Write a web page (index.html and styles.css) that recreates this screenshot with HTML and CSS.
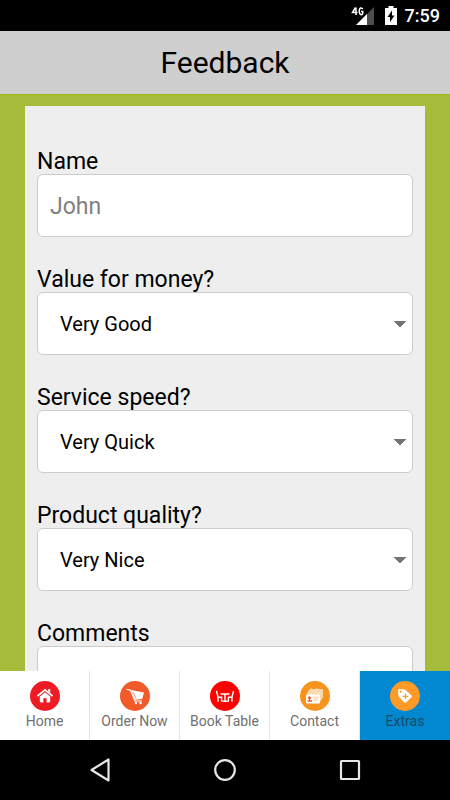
FILE: index.html
```html
<!DOCTYPE html>
<html lang="en">
<head>
<meta charset="utf-8">
<meta name="viewport" content="width=device-width, initial-scale=1">
<title>Feedback</title>
<link rel="stylesheet" href="styles.css">
</head>
<body>
<div class="status">
  <svg class="signal" width="24" height="20" viewBox="0 0 24 20" aria-hidden="true">
    <path d="M23 1V19H5Z" fill="#4d4d4d"/>
    <path d="M16 8V19H5Z" fill="#fff"/>
    <path d="M4.500 1.500 1.500 6.500H6.500M5 1.500V9" fill="none" stroke="#fff" stroke-width="1.500"/>
    <path d="M11.700 3.200C10.700 1.200 8.200 1.400 8.200 5.200S11 9.200 11.700 7.700V5.500H10" fill="none" stroke="#fff" stroke-width="1.500"/>
  </svg>
  <svg class="battery" width="12" height="19" viewBox="0 0 12 19" aria-hidden="true">
    <path d="M3.500 0H8.500V2H12V19H0V2H3.500Z" fill="#fff"/>
    <path d="M7 4.500 2.500 11H5V16L9.500 9.500H7Z" fill="#000"/>
  </svg>
  <time class="clock">7:59</time>
</div>
<header class="header"><h1 class="title">Feedback</h1></header>
<main class="content">
  <form class="card">
    <div class="field">
      <label class="label" for="name">Name</label>
      <input class="control text" id="name" type="text" placeholder="John">
    </div>
    <div class="field">
      <label class="label" for="value">Value for money?</label>
      <select class="control select" id="value"><option>Very Good</option><option>Good</option><option>Poor</option></select>
    </div>
    <div class="field">
      <label class="label" for="speed">Service speed?</label>
      <select class="control select" id="speed"><option>Very Quick</option><option>Quick</option><option>Slow</option></select>
    </div>
    <div class="field">
      <label class="label" for="quality">Product quality?</label>
      <select class="control select" id="quality"><option>Very Nice</option><option>Nice</option><option>Poor</option></select>
    </div>
    <div class="field">
      <label class="label" for="comments">Comments</label>
      <textarea class="control comments" id="comments"></textarea>
    </div>
  </form>
</main>
<nav class="tabs">
  <a class="tab" href="#home">
    <svg class="icon" viewBox="0 0 30 30" aria-hidden="true">
      <circle cx="15" cy="15" r="15" fill="#ed1c24"/>
      <path d="M7.500 15 15 8.800 22.500 15" fill="none" stroke="#fff" stroke-width="1.700"/>
      <path d="M18.200 8H20.200V12L18.200 10.500ZM9.800 15.500 15 11.300 20.200 15.500V20Q20.200 21.500 18.800 21.500H16.600V17.300H13.400V21.500H11.200Q9.800 21.500 9.800 20Z" fill="#fff"/>
    </svg>
    <span>Home</span>
  </a>
  <a class="tab" href="#order">
    <svg class="icon" viewBox="0 0 30 30" aria-hidden="true">
      <circle cx="15" cy="15" r="15" fill="#f15a29"/>
      <path d="M6.500 8.300 10.500 9.300 14.800 20H22" fill="none" stroke="#fff" stroke-width="1.100"/>
      <path d="M11 9 24 11.500 22.200 18 14.800 18.800Z" fill="#fff"/>
      <path d="M13 11 16 17.500" stroke="#f15a29" stroke-width=".6"/>
      <circle cx="16" cy="22" r="1.200" fill="#fff"/><circle cx="20.500" cy="22" r="1.200" fill="#fff"/>
    </svg>
    <span>Order Now</span>
  </a>
  <a class="tab" href="#book">
    <svg class="icon" viewBox="0 0 30 30" aria-hidden="true">
      <circle cx="15" cy="15" r="15" fill="#f00"/>
      <path d="M6.500 10 8 16.200V20.800M7.500 16.200H11.600V20.800M23.500 10 22 16.200V20.800M22.500 16.200H18.400V20.800M10.500 13H19.500M15 13V20M12.500 20.300H17.500" fill="none" stroke="#fff" stroke-width="1.400"/>
    </svg>
    <span>Book Table</span>
  </a>
  <a class="tab" href="#contact">
    <svg class="icon" viewBox="0 0 30 30" aria-hidden="true">
      <circle cx="15" cy="15" r="15" fill="#f7941d"/>
      <path d="M6.500 13.500 9 9 11 7.500 14 8.500 16 7.500 23 8.500V16L19.500 21.500Z" fill="#fde3c2"/>
      <path d="M9 13 13 9M12.500 13 16.500 9M16 13 20 9M19.500 14 23 10M20 17 23 13" stroke="#f7b566" stroke-width=".7"/>
      <rect x="6" y="13.500" width="14" height="9" rx="1" fill="#fff"/>
      <circle cx="9.500" cy="16.800" r="1.500" fill="#f15a29"/>
      <path d="M9.500 17V19.500M7.500 20H12" stroke="#f15a29" stroke-width="1.300"/>
      <path d="M13.500 16.200H18.500M13.500 18H18.500M13.500 19.800H16.500" stroke="#f9c58a" stroke-width=".9"/>
    </svg>
    <span>Contact</span>
  </a>
  <a class="tab active" href="#extras" aria-current="page">
    <svg class="icon" viewBox="0 0 30 30" aria-hidden="true">
      <circle cx="15" cy="15" r="15" fill="#ff9a26"/>
      <path d="M8 9.500Q8 8 9.500 8L15 8.500 21.500 14.500Q22.300 15.500 21.500 16.300L16 21.500Q15 22.200 14 21.300L8.500 15.500Z" fill="#fff"/>
      <circle cx="10.700" cy="10.700" r="1.100" fill="#ff9a26"/>
      <path d="M15.500 12.500V18M12.700 15.300H18.300" stroke="#ff9a26" stroke-width="1.200"/>
    </svg>
    <span>Extras</span>
  </a>
</nav>
<div class="system">
  <button class="key" type="button" aria-label="Back"><svg width="24" height="26" viewBox="0 0 24 26"><path d="M20.500 2.500V23.500L3.500 13Z" fill="none" stroke="#e6e6e6" stroke-width="2.200" stroke-linejoin="round"/></svg></button>
  <button class="key" type="button" aria-label="Home"><svg width="24" height="24" viewBox="0 0 24 24"><circle cx="12" cy="12" r="9.800" fill="none" stroke="#e6e6e6" stroke-width="2.200"/></svg></button>
  <button class="key" type="button" aria-label="Recent apps"><svg width="24" height="24" viewBox="0 0 24 24"><rect x="3" y="3" width="18" height="18" rx=".5" fill="none" stroke="#e6e6e6" stroke-width="2.200"/></svg></button>
</div>
</body>
</html>
```
FILE: styles.css
```css
* { box-sizing: border-box; }

body {
  display: flex;
  flex-direction: column;
  height: 100vh;
  margin: 0;
  overflow: hidden;
  background: #a6bb3a;
  color: #000;
  font-family: Roboto, "Liberation Sans", sans-serif;
}

.status {
  display: flex;
  flex: none;
  justify-content: flex-end;
  align-items: center;
  height: 31px;
  padding-right: 10px;
  background: #000;
  color: #fff;
}

.battery { margin: 0 8px 0 10px; }

.clock {
  font-size: 18px;
  font-weight: 500;
  line-height: 31px;
}

.header {
  flex: none;
  padding: 12px;
  background: #cfcfcf;
  text-align: center;
}

.title {
  margin: 0;
  font-size: 30px;
  font-weight: 400;
  line-height: 39px;
}

.content {
  flex: 1;
  min-height: 0;
  padding: 11px 25px;
  overflow: hidden;
  border-top: 1px solid #a0b80c;
}

.card {
  display: flex;
  flex-direction: column;
  gap: 31px;
  padding: 44px 12px;
  background: #eee;
}

.field {
  display: flex;
  flex-direction: column;
}

.label {
  font-size: 23px;
  line-height: 24px;
}

.control {
  width: 100%;
  height: 63px;
  padding: 0 12px;
  border: 1px solid #ccc;
  border-radius: 6px;
  outline: 0;
  background: #fff;
  color: #000;
  font-family: inherit;
  font-size: 23px;
}

.text { padding-top: 2px; }

.control::placeholder {
  color: #808080;
  opacity: 1;
}

.select {
  padding: 0 22px;
  appearance: none;
  background: conic-gradient(from -45deg at 50% 100%, #757575 90deg, transparent 0) right 6px center / 12px 6px no-repeat #fff;
  font-size: 20px;
}

.comments {
  height: 126px;
  padding: 12px;
  resize: none;
}

.tabs {
  display: flex;
  flex: none;
  background: #fff;
}

.tab {
  display: flex;
  flex: none;
  flex-direction: column;
  align-items: center;
  width: 20%;
  padding: 10px 0 8px;
  border-right: 1px solid #e4e4e4;
  color: #707070;
  font-size: 14px;
  line-height: 21px;
  text-decoration: none;
  white-space: nowrap;
}

.tab.active {
  border-right: 0;
  background: #0288d1;
  color: #1b4a68;
}

.icon {
  width: 30px;
  height: 30px;
}

.system {
  display: flex;
  flex: none;
  justify-content: center;
  gap: 101px;
  height: 60px;
  background: #000;
}

.key {
  display: flex;
  align-items: center;
  padding: 0;
  border: 0;
  background: none;
}
```
